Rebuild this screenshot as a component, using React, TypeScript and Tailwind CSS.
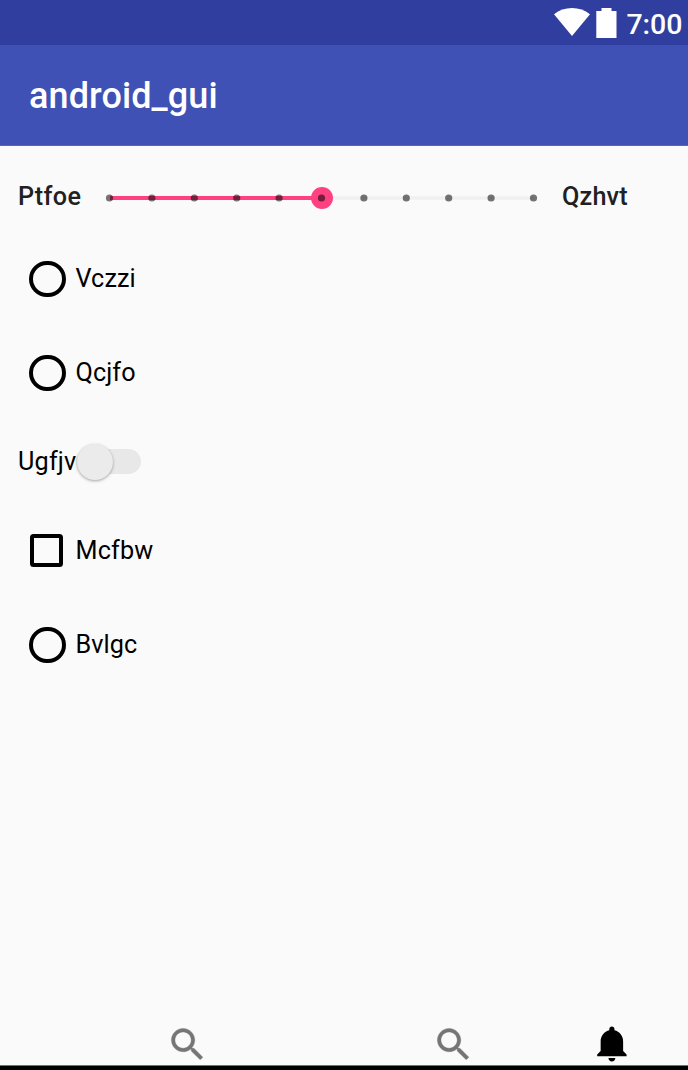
import React from "react";

function StatusBar() {
  return (
    <div className="flex h-[45px] shrink-0 items-start justify-end bg-[#303f9f] pr-[5.500px] text-white">
      <svg className="mt-[8px] h-[28px] w-[36px]" viewBox="0 0 36 28" fill="currentColor">
        <path d="M0 6.2C5.2 2.2 11.3 0 18 0s12.800 2.200 18 6.200L18 28z" />
      </svg>
      <svg className="mt-[8px] ml-[6px] h-[30px] w-[21px]" viewBox="0 0 21 30" fill="currentColor">
        <path d="M5.500 0h10v3H20.500v27H.3V3h5.200z" />
      </svg>
      <span className="mt-[5px] ml-[9px] text-[28.500px] leading-[40px] font-medium tracking-normal">7:00</span>
    </div>
  );
}

function DiscreteSlider() {
  return (
    <svg className="h-[28px] w-[440px]" viewBox="0 0 440 28">
      <path d="M8 14H432" stroke="#f0f0f0" strokeWidth="3.600" />
      <path d="M8 14H220" stroke="#ff4081" strokeWidth="3.800" />
      <circle cx="220" cy="14" r="11" fill="#ff4081" />
      {Array.from({ length: 11 }, (_, i) => (
        <circle key={i} cx={7.5 + i * 42.4} cy="14" r="3.600" fill="#000000" fillOpacity="0.540" />
      ))}
    </svg>
  );
}

function Radio({ label }: { label: string }) {
  return (
    <div className="flex h-[58px] items-center pl-[29px]">
      <span className="size-[36.500px] shrink-0 rounded-full border-4 border-black" />
      <span className="ml-[10px] tracking-[0.100px]">{label}</span>
    </div>
  );
}

function SearchIcon() {
  return (
    <svg className="size-[43.200px] shrink-0" viewBox="0 0 24 24" fill="#757575" stroke="#757575" strokeWidth="0.200">
      <path d="M15.500 14h-.79l-.28-.27C15.410 12.590 16 11.110 16 9.500 16 5.910 13.090 3 9.500 3S3 5.910 3 9.500 5.910 16 9.500 16c1.610 0 3.090-.59 4.230-1.570l.27.28v.79l5 4.990L20.490 19l-4.990-5zm-6 0C7.010 14 5 11.990 5 9.500S7.010 5 9.500 5 14 7.010 14 9.500 11.990 14 9.500 14z" />
    </svg>
  );
}

export default function App() {
  return (
    <div className="flex h-[1070px] w-[688px] flex-col overflow-hidden bg-[#fafafa] font-[Roboto,sans-serif] text-[25.200px] leading-[30px] tracking-[0.200px] text-black">
      <StatusBar />
      <header className="flex h-[101px] shrink-0 items-center border-b border-[#5666bd] bg-[#3f51b5] pt-[1px] pl-[29px] text-[36px] font-medium tracking-[0.100px] text-white">
        android_gui
      </header>
      <main className="flex grow flex-col">
        <div className="mt-[37px] flex h-[30px] items-center pl-[18px] font-medium text-[#212121]">
          <span className="w-[84px] pb-[2px] tracking-[0.400px]">Ptfoe</span>
          <DiscreteSlider />
          <span className="ml-[20px] pb-[2px]">Qzhvt</span>
        </div>
        <div className="mt-[37px]">
          <Radio label="Vczzi" />
        </div>
        <div className="mt-[36px]">
          <Radio label="Qcjfo" />
        </div>
        <div className="mt-[39px] flex h-[40px] items-center pl-[18px]">
          <span className="w-[58px] pt-[1px]">Ugfjv</span>
          <span className="flex h-[25px] w-[65px] items-center rounded-full bg-[#e8e8e8]">
            <span className="mt-[1px] ml-[0.500px] size-[36px] shrink-0 rounded-full bg-[#ebebeb] shadow-[0_1px_3px_rgba(0,0,0,0.350)]" />
          </span>
        </div>
        <div className="mt-[50px] flex h-[40px] items-center pl-[30px]">
          <span className="mb-[1px] size-[33px] rounded-[3.500px] border-4 border-black" />
          <span className="ml-[12.500px]">Mcfbw</span>
        </div>
        <div className="mt-[45px]">
          <Radio label="Bvlgc" />
        </div>
      </main>
      <nav className="flex h-[43px] shrink-0 items-start pl-[166px]">
        <span className="flex pt-[0.800px]">
          <SearchIcon />
        </span>
        <span className="ml-[223px] flex pt-[0.800px]">
          <SearchIcon />
        </span>
        <svg className="mt-[1px] ml-[116.500px] h-[42px] w-[41.500px] shrink-0" viewBox="0 0 24 24" preserveAspectRatio="none" fill="#000000">
          <path d="M11.500 22c1.100 0 2-.9 2-2h-4c0 1.100.9 2 2 2zm6.500-6v-5.500c0-3.070-2.130-5.640-5-6.320V3.500c0-.83-.67-1.500-1.500-1.500S10 2.670 10 3.500v.68c-2.870.68-5 3.250-5 6.320V16l-2 2v1h17v-1l-2-2z" />
        </svg>
      </nav>
      <div className="h-[5px] shrink-0 border-t border-[#707070] bg-black" />
    </div>
  );
}
